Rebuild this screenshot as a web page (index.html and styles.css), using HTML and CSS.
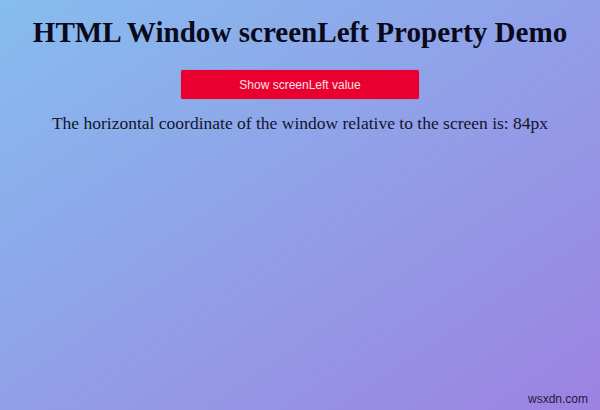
FILE: index.html
```html
<!DOCTYPE html>
<html lang="en">
<head>
<meta charset="utf-8">
<title>HTML Window screenLeft Property Demo</title>
<link rel="stylesheet" href="styles.css">
</head>
<body>
<main class="page">
  <h1 class="title">HTML Window screenLeft Property Demo</h1>
  <button class="btn" type="button">Show screenLeft value</button>
  <p class="result">The horizontal coordinate of the window relative to the screen is: 84px</p>
</main>
<span class="watermark">wsxdn.com</span>
</body>
</html>
```
FILE: styles.css
```css
html, body {
  margin: 0;
  padding: 0;
  width: 600px;
  height: 410px;
  overflow: hidden;
}
body {
  position: relative;
  background: linear-gradient(to bottom right, #86bdee 0%, #9c82e2 100%);
  font-family: "Liberation Serif", "Times New Roman", serif;
  color: #0b0b1e;
}
.page {
  display: flex;
  flex-direction: column;
  align-items: center;
  padding-top: 17px;
}
.title {
  margin: 0;
  font-size: 29.1px;
  font-weight: bold;
  line-height: 31px;
  color: #0a0a1c;
}
.btn {
  margin-top: 22px;
  width: 238px;
  height: 29px;
  border: none;
  border-radius: 2px;
  background: #ea0030;
  color: #f9e1e6;
  font-family: "Liberation Sans", Arial, sans-serif;
  font-size: 12px;
  padding: 0;
  box-shadow: 0 0 1px rgba(150, 0, 40, 0.6);
}
.result {
  margin: 14px 0 0;
  font-size: 17.5px;
  line-height: 21px;
  color: #14142a;
}
.watermark {
  position: absolute;
  right: 12px;
  bottom: 4px;
  font-family: "Liberation Sans", Arial, sans-serif;
  font-size: 12px;
  color: #1d1b40;
}
```
